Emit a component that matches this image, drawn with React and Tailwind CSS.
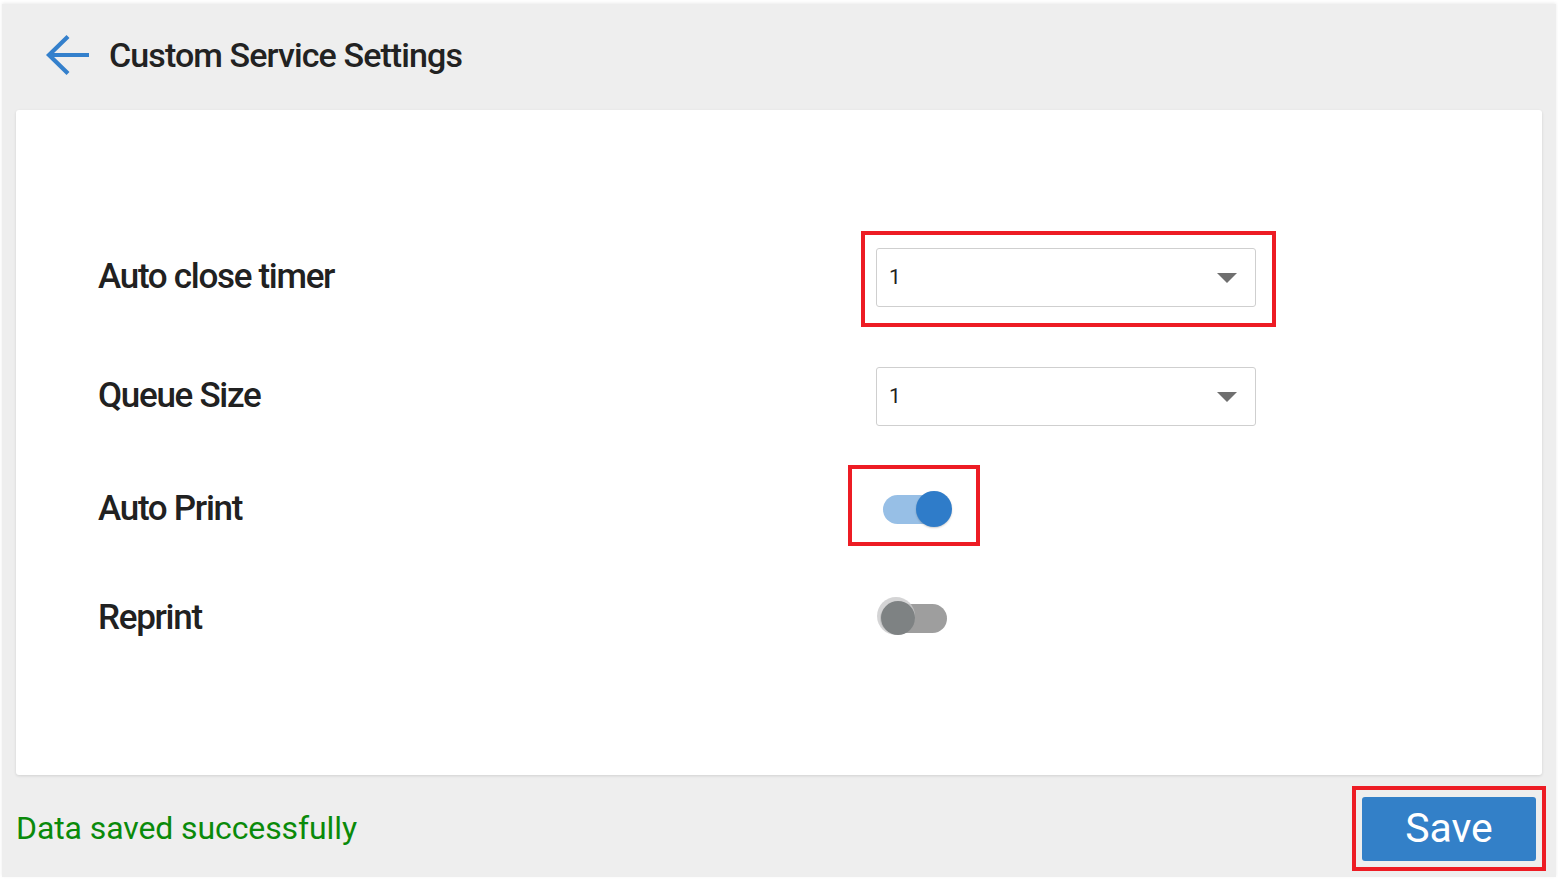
import React from 'react';

const font = { fontFamily: 'Roboto, "Noto Sans", sans-serif' };

// red annotation frame laid over a control
const Mark = ({ className }) => (
  <div className={`pointer-events-none absolute border-[4px] border-[#ed1c24] ${className}`} />
);

const Select = ({ value, marked }) => (
  <div className="relative w-[380px]">
    <div className="flex h-[59px] items-center justify-between rounded-[3px] border border-[#cfcfcf] bg-white pl-[12px] pr-[18px]">
      <span className="text-[21px] text-[#222]">{value}</span>
      <svg width="20" height="10" viewBox="0 0 20 10">
        <path d="M0 0h20L10 10z" fill="#6f6f6f" />
      </svg>
    </div>
    {marked && <Mark className="-left-[15px] -right-[20px] -top-[17px] -bottom-[20px]" />}
  </div>
);

const Toggle = ({ on, marked }) => (
  <div className="relative">
    {on ? (
      <div className="relative ml-[7px] h-[29px] w-[64px] rounded-full bg-[#97bfe6]">
        <div className="absolute -right-[5px] -top-[4px] h-[36px] w-[36px] rounded-full bg-[#2f7cc9] shadow-[0_1px_2px_rgba(0,0,0,0.2)]" />
      </div>
    ) : (
      <div className="relative ml-[4px] h-[29px] w-[67px] rounded-full bg-[#9e9e9e]">
        <div className="absolute -left-[3px] -top-[7px] h-[38px] w-[38px] rounded-full bg-[#c9c9cb]/80" />
        <div className="absolute left-[1px] -top-[3px] h-[34px] w-[34px] rounded-full bg-[#7e8283]" />
      </div>
    )}
    {marked && <Mark className="-left-[28px] -right-[33px] -top-[30px] -bottom-[22px]" />}
  </div>
);

const Row = ({ label, height, children }) => (
  <div className={`grid grid-cols-[778px_1fr] items-center ${height}`}>
    <span className="text-[35px] font-medium tracking-[-1.3px] text-[#212121]">{label}</span>
    <div className="flex items-center">{children}</div>
  </div>
);

const App = () => {
  return (
    <div className="h-[879px] w-[1558px] overflow-hidden bg-white pl-[2px] pr-[2px] pt-[4px]" style={font}>
      <div className="flex h-[873px] flex-col bg-[#eeeeee] shadow-[0_-1px_3px_rgba(0,0,0,0.08)]">
        {/* Header */}
        <header className="flex h-[106px] items-center pb-[4px] pl-[43px]">
          <svg width="44" height="42" viewBox="0 0 44 42" fill="none" stroke="#3480cc" strokeWidth="4.2">
            <path d="M44 21H4" />
            <path d="M23 2.5L4 21l19 18.5" />
          </svg>
          <h1 className="ml-[20px] text-[34px] font-medium tracking-[-0.9px] text-[#222]">Custom Service Settings</h1>
        </header>

        {/* Card */}
        <div className="mx-[14px] h-[665px] rounded-[3px] bg-white pl-[82px] pt-[108px] shadow-[0_1px_3px_rgba(0,0,0,0.12)]">
          <Row label="Auto close timer" height="h-[119px]">
            <Select value="1" marked />
          </Row>
          <Row label="Queue Size" height="h-[119px]">
            <Select value="1" />
          </Row>
          <Row label="Auto Print" height="h-[106px]">
            <Toggle on marked />
          </Row>
          <Row label="Reprint" height="h-[112px]">
            <Toggle />
          </Row>
        </div>

        {/* Footer */}
        <div className="flex flex-1 items-center justify-between pl-[14px] pr-[20px]">
          <span className="pt-[4px] text-[32px] tracking-[-0.1px] text-[#0a8a0a]">Data saved successfully</span>
          <div className="relative mt-[6px]">
            <button className="flex h-[64px] w-[174px] items-center justify-center rounded-[3px] bg-[#3380c8] text-[41px] text-white">
              Save
            </button>
            <Mark className="-left-[10px] -right-[10px] -top-[11px] -bottom-[10px]" />
          </div>
        </div>
      </div>
    </div>
  );
};

export default App;
